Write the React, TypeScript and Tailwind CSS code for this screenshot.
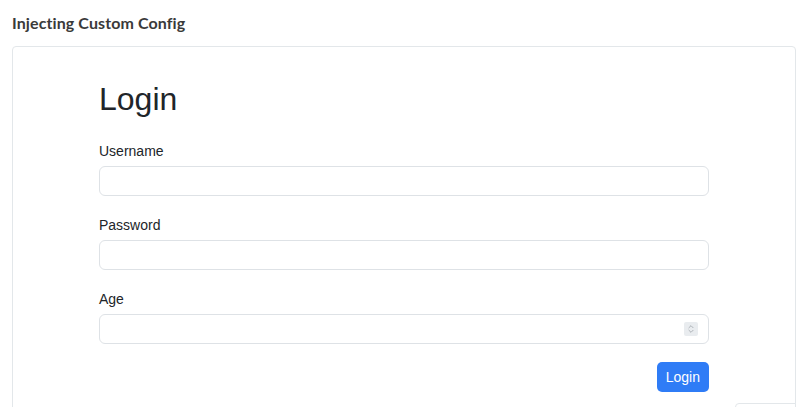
import { ChevronsUpDown } from 'lucide-react';

const Field = ({ label, children }: { label: string; children: React.ReactNode }) => (
  <div className="flex flex-col">
    <label className="text-[14px] leading-[21px] text-[#212529] mb-[4px]">{label}</label>
    {children}
  </div>
);

export default function App() {
  return (
    <div className="relative h-[407px] w-[800px] overflow-hidden bg-white" style={{ fontFamily: '"Liberation Sans", Arial, sans-serif' }}>
      <div className="px-[12px] pt-[12px]">
        <h2 className="text-[16px] leading-[21px] font-bold text-[#3a3a3a] tracking-[0.1px]" style={{ fontFamily: 'Lato, "Open Sans", sans-serif' }}>
          Injecting Custom Config
        </h2>
        <div className="mt-[13px] w-[784px] h-[400px] rounded-[4px] border border-[#e3e7ea]">
          <div className="mx-auto w-[610px] pt-[33px] flex flex-col">
            <h1 className="text-[32px] leading-[38px] font-medium text-[#212529] mb-[23px]">Login</h1>
            <Field label="Username">
              <input className="h-[30px] rounded-[6px] border border-[#dee2e6] px-3 outline-none" />
            </Field>
            <div className="h-[19px]" />
            <Field label="Password">
              <input type="password" className="h-[30px] rounded-[6px] border border-[#dee2e6] px-3 outline-none" />
            </Field>
            <div className="h-[19px]" />
            <Field label="Age">
              <div className="h-[30px] rounded-[6px] border border-[#dee2e6] flex items-center justify-end pr-[10px]">
                <div className="w-[14px] h-[14px] rounded-[2px] bg-[#e9ecef] flex items-center justify-center">
                  <ChevronsUpDown className="w-[10px] h-[10px] text-[#8a9096]" strokeWidth={1.5} />
                </div>
              </div>
            </Field>
            <div className="flex justify-end mt-[18px]">
              <button className="h-[30px] px-[9px] rounded-[5px] bg-[#2f7cf6] text-white text-[14px]">Login</button>
            </div>
          </div>
        </div>
      </div>
      <div className="absolute left-[735px] top-[403px] w-[61px] h-[20px] rounded-tl-[4px] border border-[#e3e7ea] bg-white" />
    </div>
  );
}
